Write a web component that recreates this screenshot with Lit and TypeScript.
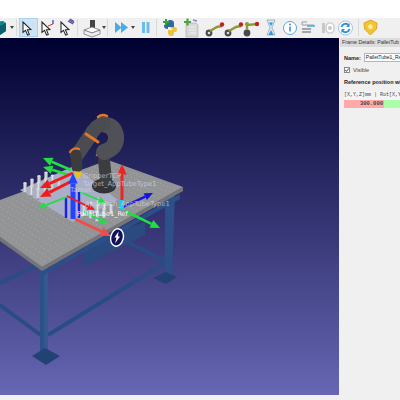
import { LitElement, html, css, svg } from "lit";
import { customElement } from "lit/decorators.js";

const cursor = (x: number, y: number, s = 1) => svg`<path transform="translate(${x} ${y}) scale(${s})" d="M0 0 L0 10 L2.4 8 L4.4 12.5 L6 11.8 L4.2 7.4 L7.5 7.2 Z" fill="#fff" stroke="#222" stroke-width="1"/>`;

const robotArm = svg`<circle cx="4" cy="15" r="3.4" fill="#4a4a4a"/><circle cx="4" cy="15" r="1.3" fill="#ddd"/><path d="M5 13 L12 9 L17 8" stroke="#8f9a35" stroke-width="2.4" fill="none"/><circle cx="17" cy="6.5" r="2.2" fill="#c0202a"/>`;

const ICONS: { w: number; s?: ReturnType<typeof svg>; on?: boolean; sep?: boolean; arrow?: boolean }[] = [
  { w: 7, s: svg`<path d="M-6 4 L3 3 L6 5 L6 13 L0 17 L-6 15 Z" fill="#17808f"/><path d="M0 8 L6 5 L6 13 L0 17 Z" fill="#0e5f6d"/>` },
  { w: 3 },
  { w: 4, arrow: true },
  { w: 2 },
  { w: 1, sep: true },
  { w: 2 },
  { w: 19, on: true, s: svg`<g transform="translate(4 3)">${cursor(0, 1, 1.05)}</g><circle cx="14" cy="6" r="2" fill="#d6dce2"/>` },
  { w: 2 },
  { w: 18, s: svg`<g transform="translate(2 3)">${cursor(0, 1, 1.05)}</g><path d="M8 8 L13 6" stroke="#d03030" stroke-width="1" fill="none"/><path d="M13 6 L13 2" stroke="#3040c0" stroke-width="1.2"/>` },
  { w: 1 },
  { w: 18, s: svg`<g transform="translate(2 3)">${cursor(0, 1, 1.05)}</g><path d="M9 3 L14 6 M10 2 L15 5 M11 1 L15 3.500" stroke="#5656a0" stroke-width="1.2"/>` },
  { w: 1, sep: true },
  { w: 5 },
  { w: 19, s: svg`<rect x="7" y="2" width="5" height="8" fill="#444"/><path d="M1 12 L9 9 L17 12 L9 15 Z" fill="#fff" stroke="#777" stroke-width=".8"/><path d="M1 12 L1 16 L9 19 L17 16 L17 12 L9 15 Z" fill="#eee" stroke="#777" stroke-width=".8"/>` },
  { w: 4, arrow: true },
  { w: 1 },
  { w: 1, sep: true },
  { w: 7 },
  { w: 13, s: svg`<path d="M0 4 L6 9 L6 4 L13 9.500 L6 15 L6 10 L0 15 Z" fill="#48ace8"/>` },
  { w: 3 },
  { w: 4, arrow: true },
  { w: 6 },
  { w: 9, s: svg`<rect x="1" y="4" width="3" height="11" fill="#6cbcec"/><rect x="5.500" y="4" width="3" height="11" fill="#6cbcec"/>` },
  { w: 6 },
  { w: 1, sep: true },
  { w: 5 },
  { w: 15, s: svg`<path d="M5 5 Q5 2 8 2 Q12 2 12 5 L12 9 L6 9 L6 11 Q2 11 2 8 Q2 6 5 6 Z" fill="#2f6a9e"/><path d="M8 9 L13 9 Q15 9 15 12 Q15 14 12 14 L12 16 Q12 18 9 18 Q6 18 6 15 L6 12 L11 12 Z" fill="#eec23c"/><path d="M1 4 H7 M4 1 V7" stroke="#3aa03a" stroke-width="2"/>` },
  { w: 6 },
  { w: 15, s: svg`<path d="M3 5 H13 L15 7 V19 H3 Z" fill="#d8d8d8" stroke="#aaa" stroke-width=".6"/><path d="M6 9 H13 M6 12 H13 M6 15 H13" stroke="#eee"/><path d="M1 4 H8 M4.500 .5 V7.500" stroke="#4fa23f" stroke-width="2.200"/><path d="M10 2 L14 3" stroke="#9a7ad8" stroke-width="1.500"/>` },
  { w: 7 },
  { w: 19, s: robotArm },
  { w: 19, s: robotArm },
  { w: 16, s: svg`<circle cx="4" cy="15" r="3.400" fill="#4a4a4a"/><path d="M4 12 L4 7 L14 6" stroke="#8f9a35" stroke-width="2.400" fill="none"/><circle cx="4" cy="6" r="2" fill="#8f9a35"/><circle cx="14" cy="6" r="2.200" fill="#c0202a"/>` },
  { w: 6 },
  { w: 12, s: svg`<path d="M2 2 H10 L7 9.500 L10 17 H2 L5 9.500 Z" fill="#d8e8f4" stroke="#8090a0" stroke-width=".6"/><path d="M3.500 17 L6 12 L8.500 17 Z" fill="#2a9ad8"/><path d="M4 4.500 H8 L6 8 Z" fill="#2a9ad8"/>` },
  { w: 5 },
  { w: 16, s: svg`<circle cx="8" cy="10" r="6.500" fill="#fff" stroke="#5aa6dc" stroke-width="1"/><rect x="7.200" y="8.500" width="1.600" height="5" fill="#4a90c8"/><circle cx="8" cy="6.500" r="1" fill="#4a90c8"/>` },
  { w: 3 },
  { w: 15, s: svg`<path d="M1 4 H6 M1 4 V7 H13" stroke="#9aa0a6" stroke-width="1" fill="none"/><path d="M6 8 H14" stroke="#48a8dc" stroke-width="1.500"/><path d="M1 11 H10 M1 14 H10" stroke="#8c8c8c" stroke-width="1.400"/>` },
  { w: 5 },
  { w: 13, s: svg`<rect x="1" y="5" width="3" height="10" fill="#c8c8c8"/><rect x="5" y="5" width="8" height="10" rx="4" fill="#fff" stroke="#c4c4c4" stroke-width="1.200"/><circle cx="9" cy="10" r="2" fill="#c8c8c8"/>` },
  { w: 4 },
  { w: 15, s: svg`<circle cx="7.500" cy="10" r="7" fill="#fff" stroke="#a8c4d8" stroke-width="1"/><path d="M3.500 9 A4.200 4.200 0 0 1 11 7.500 M11.500 11 A4.200 4.200 0 0 1 4 12.500" stroke="#2a90d4" stroke-width="1.800" fill="none"/><path d="M11.500 5 V9 H8 Z M3.500 15 V11 H7 Z" fill="#2a90d4"/>` },
  { w: 5 },
  { w: 1, sep: true },
  { w: 4 },
  { w: 15, s: svg`<path d="M7.500 2 L14 5 L13.500 11 L7.500 17 L1.500 11 L1 5 Z" fill="#f4c430" stroke="#d89a18" stroke-width=".8"/><path d="M7.500 6 L10 8 L9 11 H6 L5 8 Z" fill="#fff0a0"/>` },
];

const A = [-34, 213], B = [108, 160], C = [183, 187], D = [42, 267];
const quad = (u: number, v: number) => {
  const x = (1 - v) * ((1 - u) * A[0] + u * B[0]) + v * ((1 - u) * D[0] + u * C[0]);
  const y = (1 - v) * ((1 - u) * A[1] + u * B[1]) + v * ((1 - u) * D[1] + u * C[1]);
  return [x, y];
};
const dots = () => {
  const out = [];
  for (let i = 1; i < 26; i++)
    for (let j = 1; j < 22; j++) {
      const [x, y] = quad(i / 26, j / 22);
      out.push(svg`<circle cx=${x} cy=${y} r=".45" fill="#bcbdbf"/>`);
    }
  return out;
};

const arrow = (x1: number, y1: number, x2: number, y2: number, c: string, w = 2.4, h = 6) => {
  const dx = x2 - x1, dy = y2 - y1, l = Math.hypot(dx, dy);
  const ux = dx / l, uy = dy / l;
  const bx = x2 - ux * h * 1.9, by = y2 - uy * h * 1.9;
  const nx = -uy * h * 0.85, ny = ux * h * 0.85;
  return svg`<line x1=${x1} y1=${y1} x2=${bx} y2=${by} stroke=${c} stroke-width=${w}/><polygon points="${x2},${y2} ${bx + nx},${by + ny} ${bx - nx},${by - ny}" fill=${c}/>`;
};

const peg = (x: number, y: number) => svg`<rect x=${x - 1.7} y=${y - 9} width="3.400" height="10" fill="#b8bcc0"/><rect x=${x - 0.7} y=${y - 9} width="1.200" height="10" fill="#e2e4e6"/><ellipse cx=${x} cy=${y - 9} rx="1.700" ry="1" fill="#d8dadc"/><ellipse cx=${x} cy=${y + 1} rx="1.700" ry=".8" fill="#858a96"/>`;

const pegs = () => {
  const out = [];
  const Pu = [7, -3.5], Pv = [6.5, 3];
  for (let u = 3; u >= 0; u--)
    for (let v = 0; v < 3; v++) {
      out.push(peg(25 + Pu[0] * u + Pv[0] * v, 192 + Pu[1] * u + Pv[1] * v));
    }
  for (let u = 2; u >= 0; u--)
    for (let v = 0; v < 3; v++) {
      out.push(peg(84 + Pu[0] * u + Pv[0] * v, 215 + Pu[1] * u + Pv[1] * v));
    }
  return out;
};

const scene = svg`
  <defs>
    <linearGradient id="sky" x1="0" y1="0" x2="0" y2="1"><stop offset="0" stop-color="#000030"/><stop offset="1" stop-color="#6666b3"/></linearGradient>
  </defs>
  <rect x="0" y="38" width="339" height="357" fill="url(#sky)"/>
  <g fill="none" stroke="#2a4c85" stroke-width="4">
    <path d="M0 283 L36 266"/>
    <path d="M0 305 L42 336"/>
    <path d="M48 335 L165 263"/>
    <path d="M127 242 L165 261"/>
  </g>
  <polygon points="83,243 145,222 145,235 83,267" fill="#2b4a80"/>
  <polygon points="40,268 48,264 48,351 40,351" fill="#2c5088"/>
  <polygon points="44,266 48,264 48,351 44,351" fill="#33598f"/>
  <polygon points="165,198 175,193 172,276 165,276" fill="#2c5088"/>
  <polygon points="45,348 60,356 46,365 32,356" fill="#234274"/>
  <polygon points="166,272 177,277 166,284 153,278" fill="#234274"/>
  <polygon points="42,272 180,194 180,199 42,276" fill="#2b4f88"/>
  <polygon points="0,237 42,267 183,187 183,191 42,271 0,241" fill="#737578"/>
  <polygon points="0,200 108,160 183,187 42,267 0,237" fill="#939496"/>
  ${dots()}
  <polygon points="20,190 74,166 118,200 73,222" fill="#a8afc6"/>
  ${pegs()}
  <ellipse cx="104" cy="186" rx="12" ry="7.500" fill="#333438"/>
  <g fill="none" stroke-linecap="round">
    <path d="M106 180 L104 160" stroke="#3c3d41" stroke-width="12"/>
    <path d="M97 155 A8 8 0 0 1 110 154" stroke="#e0782a" stroke-width="2.500"/>
    <path d="M104 152 Q117 148 116 136 Q114 126 106 125" stroke="#505156" stroke-width="16"/>
    <path d="M104 123 Q96 125 90 136 L77 155" stroke="#4b4c51" stroke-width="14"/>
    <path d="M98 117 A8 8 0 0 1 107 116" stroke="#e0782a" stroke-width="2.500"/>
    <path d="M86 134 L98 142" stroke="#e0782a" stroke-width="3"/>
    <path d="M76 155 L77 167" stroke="#3b3c40" stroke-width="11"/>
    <path d="M70 152 A7 7 0 0 1 79 149" stroke="#e0782a" stroke-width="2.200"/>
  </g>
  <polygon points="74,171 82,172 80,178 76,178" fill="#e8c020"/>
  ${arrow(71, 170, 43, 158, "#22dd44", 2.600, 5)}
  ${arrow(69, 175, 43, 167, "#22dd44", 2.600, 5)}
  ${arrow(73, 173, 40, 188, "#ee1c1c", 3, 5.500)}
  ${arrow(74, 180, 40, 197, "#ee1c1c", 3, 5.500)}
  <line x1="66" y1="218" x2="66" y2="197" stroke="#1c1cf0" stroke-width="2.400"/>
  <line x1="79" y1="218" x2="79" y2="192" stroke="#1c1cf0" stroke-width="2.400"/>
  ${arrow(73, 219, 73, 173, "#2244ff", 5, 5.500)}
  ${arrow(67, 197, 38, 208, "#22dd44", 1.800, 4)}
  ${arrow(67, 196, 95, 210, "#ee1c1c", 1.800, 4)}
  ${arrow(80, 192, 106, 203, "#22dd44", 1.800, 4)}
  ${arrow(84, 212, 107, 223, "#22dd44", 1.800, 4)}
  ${arrow(75, 219, 111, 236, "#f04c4c", 2.600, 5.500)}
  ${arrow(122, 202, 122, 164, "#ee2424", 3, 5.500)}
  ${arrow(123, 207, 153, 193, "#1414e0", 2.400, 4.500)}
  ${arrow(125, 211, 160, 228, "#22dd44", 2.600, 5)}
  <rect x="119" y="200" width="5" height="9" fill="#22c8ee"/>
  <g class="lbl">
    <text x="83" y="178">GripperTCP</text>
    <text x="83" y="186">Target_AppTubeType1</text>
    <text x="70" y="192">Target</text>
    <text x="85" y="206">Approach_AppTubeType1</text>
    <text class="br" x="77" y="216">PalletTube1_Ref</text>
  </g>
  <ellipse cx="117" cy="237.500" rx="7" ry="9.500" fill="#fff" transform="rotate(14 117 237.500)"/>
  <ellipse cx="117" cy="237.500" rx="5.600" ry="8" fill="#10105c" transform="rotate(14 117 237.500)"/>
  <path d="M118.500 231.500 L114.500 237.500 L116.500 237.500 L115 243.500 L120 236.500 L118 236.500 Z" fill="#fff"/>
`;

@customElement("app-root")
export class AppRoot extends LitElement {
  static styles = css`
    :host { display: block; width: 400px; height: 400px; background: #f0f0f0; font-family: "Liberation Sans", Arial, sans-serif; overflow: hidden; }
    .top { height: 18px; background: #fff; }
    .bar { height: 20px; display: flex; align-items: flex-start; background: #f0f0f0; overflow: hidden; }
    .cell { flex: none; height: 19px; display: block; overflow: visible; }
    .cell.on { background: #cde4f7; outline: 1px solid #a8d0f0; outline-offset: -1px; }
    .sep { flex: none; height: 17px; margin-top: 1px; background: #d9d9d9; }
    .drop { flex: none; height: 19px; display: flex; align-items: center; }
    .drop i { display: block; width: 0; height: 0; border: 2px solid transparent; border-top: 3px solid #444; border-bottom: 0; }
    .main { height: 357px; display: flex; }
    .view { flex: none; width: 339px; height: 357px; display: block; }
    .view .lbl text { font: 6.800px "DejaVu Sans", sans-serif; fill: #d8d8e0; fill-opacity: .72; }
    .view .lbl text.br { fill: #fff; fill-opacity: .95; font-size: 6.500px; }
    .panel { flex: 1; min-width: 0; overflow: hidden; display: flex; flex-direction: column; padding-left: 1px; }
    .title { height: 9px; line-height: 9px; background: #dcdcdc; color: #333; font-size: 5.200px; padding-left: 2px; white-space: nowrap; flex: none; overflow: hidden; }
    .name { display: flex; align-items: center; gap: 3px; margin: 6px 0 0 4px; font-size: 5.500px; font-weight: bold; color: #222; height: 9px; }
    .name span { width: 37px; height: 9px; flex: none; box-sizing: border-box; border: 1px solid #b4b4b4; background: #fff; font-weight: normal; font-size: 5px; line-height: 7px; padding-left: 1px; white-space: nowrap; overflow: hidden; }
    .vis { display: flex; align-items: center; gap: 3px; margin: 3px 0 0 4px; height: 9px; font-size: 5.500px; color: #444; }
    .vis svg { width: 6px; height: 6px; display: block; flex: none; }
    .ref { margin: 5px 0 0 4px; font-size: 5.500px; font-weight: bold; color: #222; white-space: nowrap; height: 7px; line-height: 7px; }
    .hdr { margin: 5px 0 0 4px; height: 9px; line-height: 9px; background: #f4f4f4; font: 5px/9px "Liberation Mono", monospace; color: #444; white-space: nowrap; overflow: hidden; }
    .row { display: flex; margin-left: 4px; height: 8px; }
    .row .r { width: 40px; flex: none; background: #ffaaaa; font: bold 5.500px/8px "Liberation Mono", monospace; color: #444; text-align: right; padding-right: 1px; box-sizing: border-box; }
    .row .g { flex: 1; background: #aaffaa; }
    .foot { height: 5px; background: #f0f0f0; }
  `;

  render() {
    return html`
      <div class="top"></div>
      <div class="bar">
        ${ICONS.map((c) =>
          c.sep
            ? html`<div class="sep" style="width:${c.w}px"></div>`
            : c.arrow
            ? html`<div class="drop" style="width:${c.w}px"><i></i></div>`
            : c.s
            ? html`<svg class="cell ${c.on ? "on" : ""}" style="width:${c.w}px" viewBox="0 0 ${c.w} 19">${c.s}</svg>`
            : html`<div style="flex:none;width:${c.w}px"></div>`
        )}
      </div>
      <div class="main">
        <svg class="view" viewBox="0 38 339 357">${scene}</svg>
        <div class="panel">
          <div class="title">Frame Details: PalletTub</div>
          <div class="name">Name: <span>PalletTube1_Re</span></div>
          <div class="vis"><svg viewBox="0 0 6 6"><rect x=".5" y=".5" width="5" height="5" fill="#fff" stroke="#888"/><path d="M1.200 3 L2.500 4.400 L4.800 1.500" fill="none" stroke="#444"/></svg>Visible</div>
          <div class="ref">Reference position wi</div>
          <div class="hdr">[X,Y,Z]mm | Rot[X,Y</div>
          <div class="row"><div class="r">300.000</div><div class="g"></div></div>
        </div>
      </div>
      <div class="foot"></div>
    `;
  }
}
